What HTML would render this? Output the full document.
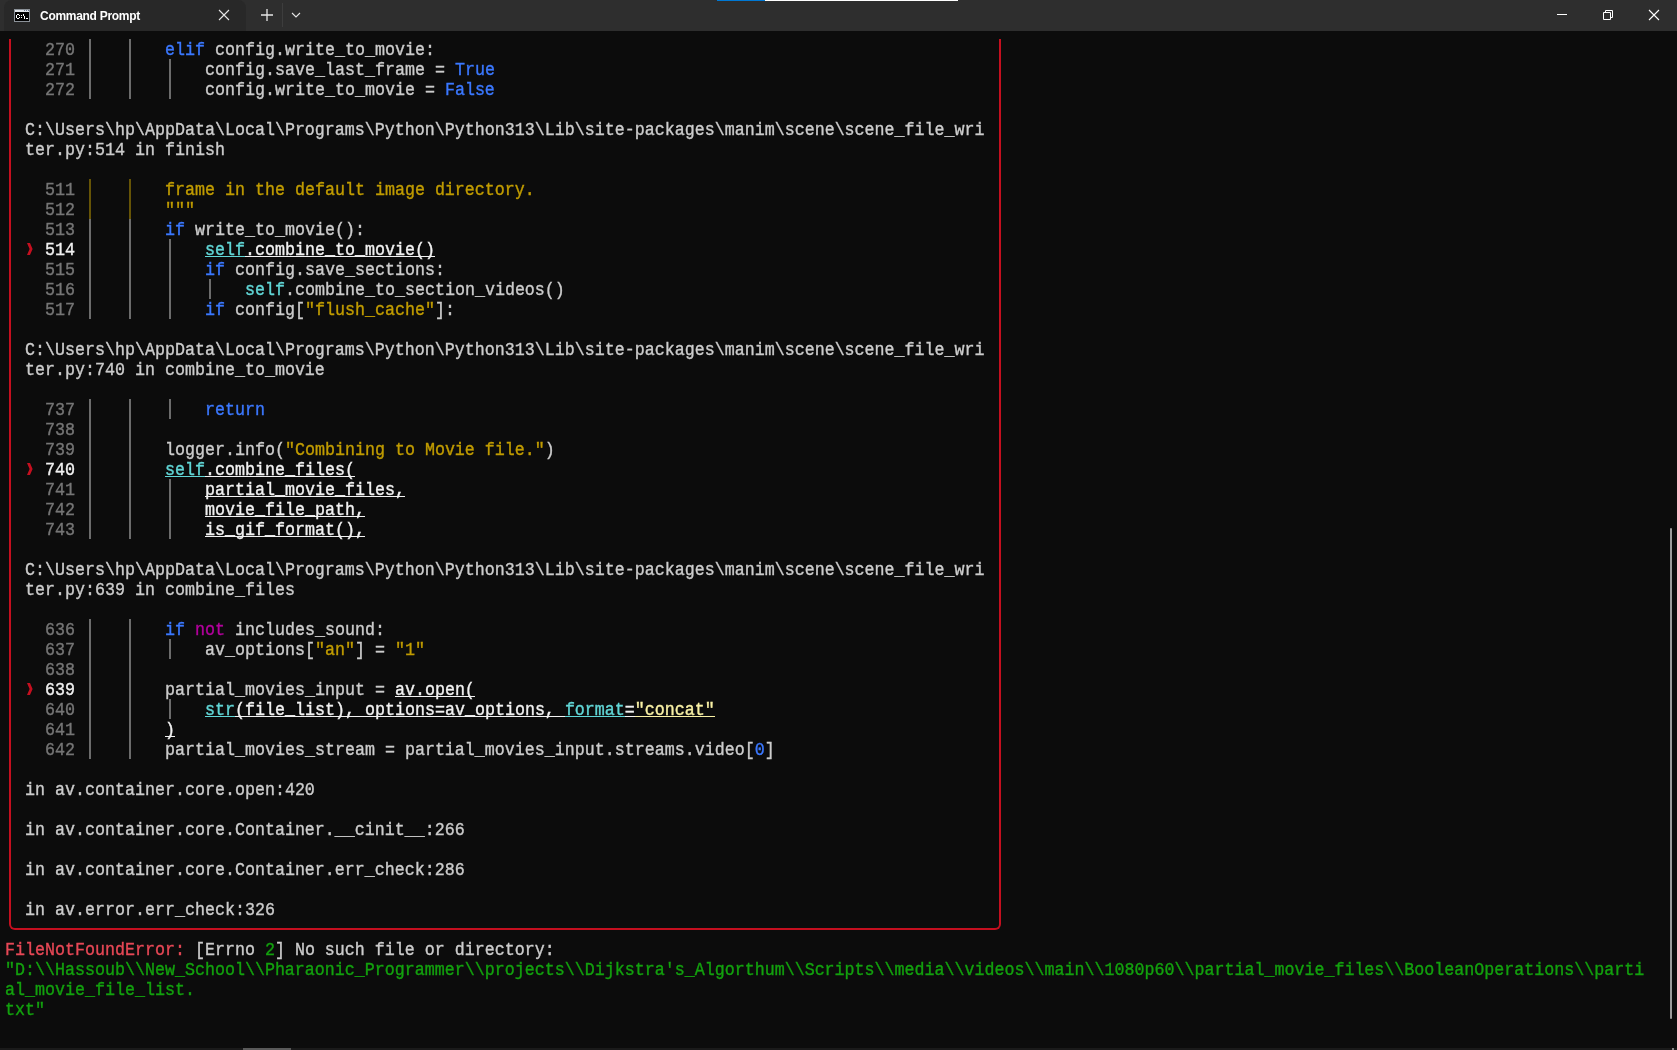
<!DOCTYPE html>
<html><head><meta charset="utf-8"><title>Command Prompt</title>
<style>
html,body{margin:0;padding:0;}
body{-webkit-font-smoothing:antialiased;width:1677px;height:1050px;overflow:hidden;background:#0c0c0c;position:relative;font-family:"Liberation Mono",monospace;}
.r{position:absolute;transform:scaleY(1.07);transform-origin:0 14.5px;-webkit-text-stroke:0.35px currentColor;height:20px;white-space:pre;font-size:16.67px;line-height:20px;}
.r span{display:inline-block;height:20px;vertical-align:top;}
.u{background-image:linear-gradient(currentColor,currentColor);background-repeat:no-repeat;background-size:100% 1px;background-position:0 15px;}
.g{position:absolute;width:2px;}
.r span.us{position:relative;top:-1px;}
.d{color:#cccccc}
.ln{color:#767676}
.lh{color:#f2f2f2}
.kw{color:#3b78ff}
.st{color:#c19c00}
.cy{color:#61d6d6}
.wh{color:#f2f2f2}
.mg{color:#b4009e}
.rd{color:#e74856}
.gr{color:#13a10e}
.sy{color:#f9f1a5}
.bl{color:#3b78ff}
</style></head><body>
<div id="term" style="position:absolute;left:0;top:0;width:1677px;height:1050px;will-change:transform">
<div class="r" style="top:41px;left:45px"><span class="ln">270</span></div>
<div class="r" style="top:41px;left:165px"><span class="kw">elif</span><span class="d"> config.write_to_movie:</span></div>
<div class="r" style="top:61px;left:45px"><span class="ln">271</span></div>
<div class="r" style="top:61px;left:205px"><span class="d">config.save_last_frame = </span><span class="kw">True</span></div>
<div class="r" style="top:81px;left:45px"><span class="ln">272</span></div>
<div class="r" style="top:81px;left:205px"><span class="d">config.write_to_movie = </span><span class="kw">False</span></div>
<div class="r" style="top:121px;left:25px"><span class="d">C:\Users\hp\AppData\Local\Programs\Python\Python313\Lib\site-packages\manim\scene\scene_file_wri</span></div>
<div class="r" style="top:141px;left:25px"><span class="d">ter.py:514 in finish</span></div>
<div class="r" style="top:181px;left:45px"><span class="ln">511</span></div>
<div class="r" style="top:181px;left:165px"><span class="st">frame in the default image directory.</span></div>
<div class="r" style="top:201px;left:45px"><span class="ln">512</span></div>
<div class="r" style="top:201px;left:165px"><span class="st">&quot;&quot;&quot;</span></div>
<div class="r" style="top:221px;left:45px"><span class="ln">513</span></div>
<div class="r" style="top:221px;left:165px"><span class="kw">if</span><span class="d"> write_to_movie():</span></div>
<div class="r" style="top:241px;left:45px"><span class="lh">514</span></div>
<div class="r" style="top:241px;left:205px"><span class="cy">self</span><span class="wh">.combine<span class="us">_</span>to<span class="us">_</span>movie()</span></div>
<div style="position:absolute;left:205px;top:256px;width:40px;height:1px;background:#61d6d6"></div>
<div style="position:absolute;left:245px;top:256px;width:190px;height:1px;background:#f2f2f2"></div>
<div class="r" style="top:261px;left:45px"><span class="ln">515</span></div>
<div class="r" style="top:261px;left:205px"><span class="kw">if</span><span class="d"> config.save_sections:</span></div>
<div class="r" style="top:281px;left:45px"><span class="ln">516</span></div>
<div class="r" style="top:281px;left:245px"><span class="cy">self</span><span class="d">.combine_to_section_videos()</span></div>
<div class="r" style="top:301px;left:45px"><span class="ln">517</span></div>
<div class="r" style="top:301px;left:205px"><span class="kw">if</span><span class="d"> config[</span><span class="st">&quot;flush_cache&quot;</span><span class="d">]:</span></div>
<div class="r" style="top:341px;left:25px"><span class="d">C:\Users\hp\AppData\Local\Programs\Python\Python313\Lib\site-packages\manim\scene\scene_file_wri</span></div>
<div class="r" style="top:361px;left:25px"><span class="d">ter.py:740 in combine_to_movie</span></div>
<div class="r" style="top:401px;left:45px"><span class="ln">737</span></div>
<div class="r" style="top:401px;left:205px"><span class="kw">return</span></div>
<div class="r" style="top:421px;left:45px"><span class="ln">738</span></div>
<div class="r" style="top:441px;left:45px"><span class="ln">739</span></div>
<div class="r" style="top:441px;left:165px"><span class="d">logger.info(</span><span class="st">&quot;Combining to Movie file.&quot;</span><span class="d">)</span></div>
<div class="r" style="top:461px;left:45px"><span class="lh">740</span></div>
<div class="r" style="top:461px;left:165px"><span class="cy">self</span><span class="wh">.combine<span class="us">_</span>files(</span></div>
<div style="position:absolute;left:165px;top:476px;width:40px;height:1px;background:#61d6d6"></div>
<div style="position:absolute;left:205px;top:476px;width:150px;height:1px;background:#f2f2f2"></div>
<div class="r" style="top:481px;left:45px"><span class="ln">741</span></div>
<div class="r" style="top:481px;left:205px"><span class="wh">partial<span class="us">_</span>movie<span class="us">_</span>files,</span></div>
<div style="position:absolute;left:205px;top:496px;width:200px;height:1px;background:#f2f2f2"></div>
<div class="r" style="top:501px;left:45px"><span class="ln">742</span></div>
<div class="r" style="top:501px;left:205px"><span class="wh">movie<span class="us">_</span>file<span class="us">_</span>path,</span></div>
<div style="position:absolute;left:205px;top:516px;width:160px;height:1px;background:#f2f2f2"></div>
<div class="r" style="top:521px;left:45px"><span class="ln">743</span></div>
<div class="r" style="top:521px;left:205px"><span class="wh">is<span class="us">_</span>gif<span class="us">_</span>format(),</span></div>
<div style="position:absolute;left:205px;top:536px;width:160px;height:1px;background:#f2f2f2"></div>
<div class="r" style="top:561px;left:25px"><span class="d">C:\Users\hp\AppData\Local\Programs\Python\Python313\Lib\site-packages\manim\scene\scene_file_wri</span></div>
<div class="r" style="top:581px;left:25px"><span class="d">ter.py:639 in combine_files</span></div>
<div class="r" style="top:621px;left:45px"><span class="ln">636</span></div>
<div class="r" style="top:621px;left:165px"><span class="kw">if</span><span class="d"> </span><span class="mg">not</span><span class="d"> includes_sound:</span></div>
<div class="r" style="top:641px;left:45px"><span class="ln">637</span></div>
<div class="r" style="top:641px;left:205px"><span class="d">av_options[</span><span class="st">&quot;an&quot;</span><span class="d">] = </span><span class="st">&quot;1&quot;</span></div>
<div class="r" style="top:661px;left:45px"><span class="ln">638</span></div>
<div class="r" style="top:681px;left:45px"><span class="lh">639</span></div>
<div class="r" style="top:681px;left:165px"><span class="d">partial_movies_input = </span><span class="wh">av.open(</span></div>
<div style="position:absolute;left:395px;top:696px;width:80px;height:1px;background:#f2f2f2"></div>
<div class="r" style="top:701px;left:45px"><span class="ln">640</span></div>
<div class="r" style="top:701px;left:205px"><span class="cy">str</span><span class="wh">(file<span class="us">_</span>list), options=av<span class="us">_</span>options, </span><span class="cy">format</span><span class="wh">=</span><span class="sy">&quot;concat&quot;</span></div>
<div style="position:absolute;left:205px;top:716px;width:30px;height:1px;background:#61d6d6"></div>
<div style="position:absolute;left:235px;top:716px;width:330px;height:1px;background:#f2f2f2"></div>
<div style="position:absolute;left:565px;top:716px;width:60px;height:1px;background:#61d6d6"></div>
<div style="position:absolute;left:625px;top:716px;width:10px;height:1px;background:#f2f2f2"></div>
<div style="position:absolute;left:635px;top:716px;width:80px;height:1px;background:#f9f1a5"></div>
<div class="r" style="top:721px;left:45px"><span class="ln">641</span></div>
<div class="r" style="top:721px;left:165px"><span class="wh">)</span></div>
<div style="position:absolute;left:165px;top:736px;width:10px;height:1px;background:#f2f2f2"></div>
<div class="r" style="top:741px;left:45px"><span class="ln">642</span></div>
<div class="r" style="top:741px;left:165px"><span class="d">partial_movies_stream = partial_movies_input.streams.video[</span><span class="bl">0</span><span class="d">]</span></div>
<div class="r" style="top:781px;left:25px"><span class="d">in av.container.core.open:420</span></div>
<div class="r" style="top:821px;left:25px"><span class="d">in av.container.core.Container.__cinit__:266</span></div>
<div class="r" style="top:861px;left:25px"><span class="d">in av.container.core.Container.err_check:286</span></div>
<div class="r" style="top:901px;left:25px"><span class="d">in av.error.err_check:326</span></div>
<div class="r" style="top:941px;left:5px"><span class="rd">FileNotFoundError:</span><span class="d"> [Errno </span><span class="gr">2</span><span class="d">] No such file or directory:</span></div>
<div class="r" style="top:961px;left:5px"><span class="gr">&quot;D:\\Hassoub\\New_School\\Pharaonic_Programmer\\projects\\Dijkstra&#x27;s_Algorthum\\Scripts\\media\\videos\\main\\1080p60\\partial_movie_files\\BooleanOperations\\parti</span></div>
<div class="r" style="top:981px;left:5px"><span class="gr">al_movie_file_list.</span></div>
<div class="r" style="top:1001px;left:5px"><span class="gr">txt&quot;</span></div>
<div class="g" style="left:89px;top:179px;height:40px;background:#665406"></div>
<div class="g" style="left:89px;top:39px;height:60px;background:#6c6c6c"></div>
<div class="g" style="left:89px;top:219px;height:100px;background:#6c6c6c"></div>
<div class="g" style="left:89px;top:399px;height:140px;background:#6c6c6c"></div>
<div class="g" style="left:89px;top:619px;height:140px;background:#6c6c6c"></div>
<div class="g" style="left:129px;top:179px;height:40px;background:#665406"></div>
<div class="g" style="left:129px;top:39px;height:60px;background:#6c6c6c"></div>
<div class="g" style="left:129px;top:219px;height:100px;background:#6c6c6c"></div>
<div class="g" style="left:129px;top:399px;height:140px;background:#6c6c6c"></div>
<div class="g" style="left:129px;top:619px;height:140px;background:#6c6c6c"></div>
<div class="g" style="left:169px;top:59px;height:40px;background:#6c6c6c"></div>
<div class="g" style="left:169px;top:239px;height:80px;background:#6c6c6c"></div>
<div class="g" style="left:169px;top:399px;height:20px;background:#6c6c6c"></div>
<div class="g" style="left:169px;top:479px;height:60px;background:#6c6c6c"></div>
<div class="g" style="left:169px;top:639px;height:20px;background:#6c6c6c"></div>
<div class="g" style="left:169px;top:699px;height:20px;background:#6c6c6c"></div>
<div class="g" style="left:209px;top:279px;height:20px;background:#6c6c6c"></div>
<svg style="position:absolute;left:25px;top:239px" width="10" height="20" viewBox="0 0 10 20"><path d="M2 4H5L7.6 10L5 16H2L4.6 10Z" fill="#c50f1f"/></svg>
<svg style="position:absolute;left:25px;top:459px" width="10" height="20" viewBox="0 0 10 20"><path d="M2 4H5L7.6 10L5 16H2L4.6 10Z" fill="#c50f1f"/></svg>
<svg style="position:absolute;left:25px;top:679px" width="10" height="20" viewBox="0 0 10 20"><path d="M2 4H5L7.6 10L5 16H2L4.6 10Z" fill="#c50f1f"/></svg>
<div style="position:absolute;left:9px;top:39px;width:992px;height:891px;box-sizing:border-box;border:2px solid #c50f1f;border-top:none;border-radius:0 0 6px 6px;"></div>
</div>
<div id="bar" style="position:absolute;left:0;top:0;width:1677px;height:31px;background:#2e2e2e;will-change:transform">
<div style="position:absolute;left:4px;top:0;width:242px;height:31px;background:#282828;border-radius:8px 8px 0 0;"></div>
<svg style="position:absolute;left:14px;top:9px" width="16" height="13" viewBox="0 0 16 13" shape-rendering="crispEdges">
<rect x="0" y="0" width="16" height="13" fill="#8b9198"/>
<rect x="1" y="1" width="14" height="2" fill="#dfe3e8"/>
<rect x="10" y="1" width="1" height="1" fill="#6a7890"/><rect x="12" y="1" width="1" height="1" fill="#6a7890"/><rect x="14" y="1" width="1" height="1" fill="#6a7890"/>
<rect x="1" y="3" width="14" height="9" fill="#000"/>
<g fill="#fff">
<rect x="2" y="6" width="1" height="3"/><rect x="3" y="5" width="2" height="1"/><rect x="3" y="9" width="2" height="1"/><rect x="5" y="6" width="1" height="1"/><rect x="5" y="8" width="1" height="1"/>
<rect x="7" y="6" width="1" height="1"/><rect x="7" y="8" width="1" height="1"/>
<rect x="9" y="5" width="1" height="2"/><rect x="10" y="7" width="1" height="3"/>
<rect x="12" y="9" width="2" height="1"/>
</g></svg>
<div style="position:absolute;left:40px;top:6px;height:20px;line-height:20px;font-family:'Liberation Sans',sans-serif;font-size:12px;font-weight:bold;letter-spacing:-0.29px;color:#ffffff;white-space:pre">Command Prompt</div>
<svg style="position:absolute;left:218px;top:9px" width="12" height="12" viewBox="0 0 12 12"><path d="M1 1L11 11M11 1L1 11" stroke="#e6e6e6" stroke-width="1.1"/></svg>
<svg style="position:absolute;left:260px;top:8px" width="14" height="14" viewBox="0 0 14 14"><path d="M7 1V13M1 7H13" stroke="#e6e6e6" stroke-width="1.3"/></svg>
<div style="position:absolute;left:282px;top:3px;width:1px;height:24px;background:#3d3d3d"></div>
<svg style="position:absolute;left:290px;top:11px" width="12" height="8" viewBox="0 0 12 8"><path d="M2 2L6 6L10 2" fill="none" stroke="#e6e6e6" stroke-width="1.1"/></svg>
<div style="position:absolute;left:1557px;top:14px;width:10px;height:1px;background:#ffffff"></div>
<svg style="position:absolute;left:1600px;top:8px" width="16" height="16" viewBox="0 0 16 16"><path d="M3.5 4.5H10.5V11.5H3.5Z" fill="none" stroke="#fff" stroke-width="1"/><path d="M5.5 4.5V2.5H12.5V9.5H10.5" fill="none" stroke="#fff" stroke-width="1"/></svg>
<svg style="position:absolute;left:1648px;top:9px" width="12" height="12" viewBox="0 0 12 12"><path d="M1 1L11 11M11 1L1 11" stroke="#ffffff" stroke-width="1.1"/></svg>
<div style="position:absolute;left:717px;top:0;width:48px;height:1px;background:#0078d4;"></div>
<div style="position:absolute;left:765px;top:0;width:193px;height:1px;background:#ffffff;"></div>
</div>
<div style="position:absolute;left:1670px;top:528px;width:2px;height:491px;background:#9a9a9a;border-radius:1px"></div>
<div style="position:absolute;left:0;top:1048px;width:1677px;height:2px;background:#1a1a1a"></div>
<div style="position:absolute;left:1672px;top:1048px;width:2px;height:2px;background:#888888"></div>
<div style="position:absolute;left:243px;top:1048px;width:48px;height:2px;background:#5a5a5a"></div>
</body></html>
